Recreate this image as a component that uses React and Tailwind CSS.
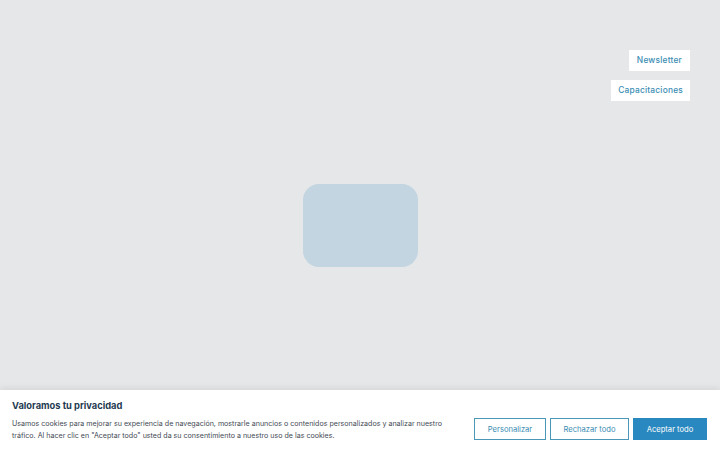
export default function App() {
  return (
    <div className="relative h-[450px] w-[720px] overflow-hidden bg-[#e5e7e9]" style={{ fontFamily: "Inter, 'Noto Sans', sans-serif" }}>
      <div className="absolute right-[30px] top-[50px] flex flex-col items-end gap-[9px]">
        <div className="flex h-[21px] items-center bg-white px-[8px] text-[8.4px] font-medium tracking-[0.2px] text-[#3a8db4]">Newsletter</div>
        <div className="flex h-[21px] items-center bg-white px-[7px] text-[8.4px] font-medium tracking-[0.2px] text-[#3a8db4]">Capacitaciones</div>
      </div>
      <div className="flex h-full items-center justify-center">
        <div className="h-[83px] w-[115px] rounded-[16px] bg-[#c2d5e1]"></div>
      </div>
      <div className="absolute bottom-0 left-0 right-0 flex h-[60px] items-center justify-between bg-white pl-[12px] pr-[13px] shadow-[0_-2px_6px_rgba(0,0,0,0.08)]">
        <div className="flex flex-col">
          <div className="text-[9.3px] font-bold leading-[14px] text-[#1e3a50]">Valoramos tu privacidad</div>
          <div className="mt-[5px] text-[7.1px] leading-[12px] text-[#3f4a54]">
            Usamos cookies para mejorar su experiencia de navegación, mostrarle anuncios o contenidos personalizados y analizar nuestro
            <br />
            tráfico. Al hacer clic en "Aceptar todo" usted da su consentimiento a nuestro uso de las cookies.
          </div>
        </div>
        <div className="mt-[18px] flex gap-[4px]">
          <button className="flex h-[22px] w-[72px] items-center justify-center border-[1.5px] border-[#4b97b8] bg-white pt-[1px] text-[7.6px] text-[#3a8db4]">Personalizar</button>
          <button className="flex h-[22px] w-[79px] items-center justify-center border-[1.5px] border-[#4b97b8] bg-white pt-[1px] text-[7.6px] text-[#3a8db4]">Rechazar todo</button>
          <button className="flex h-[22px] w-[74px] items-center justify-center bg-[#2a88c0] pt-[1px] text-[7.6px] text-white">Aceptar todo</button>
        </div>
      </div>
    </div>
  );
}
